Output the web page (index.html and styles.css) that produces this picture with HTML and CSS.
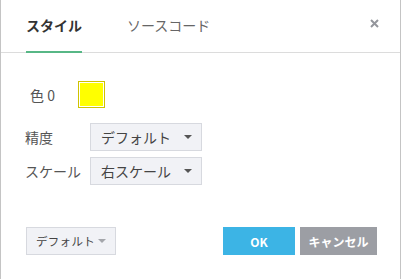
FILE: index.html
```html
<!DOCTYPE html>
<html>
<head>
	<meta charset="UTF-8">
	<title>スタイル</title>
	<link rel="stylesheet" href="styles.css">
</head>
<body>
	<div class="dialog">
		<div class="header">
			<span class="tab active">スタイル</span>
			<span class="tab">ソースコード</span>
			<svg class="close" width="9" height="9" viewBox="0 0 9 9">
				<path d="M1 1L8 8M8 1L1 8" stroke="#94969c" stroke-width="2"/>
			</svg>
		</div>

		<div class="content">
			<div class="row color-row">
				<span class="label">色 0</span>
				<span class="swatch"></span>
			</div>
			<div class="row">
				<span class="label">精度</span>
				<span class="select">デフォルト<i class="arrow"></i></span>
			</div>
			<div class="row">
				<span class="label">スケール</span>
				<span class="select">右スケール<i class="arrow"></i></span>
			</div>
		</div>

		<div class="footer">
			<span class="btn-default">デフォルト<i class="arrow light"></i></span>
			<span class="btn ok">OK</span>
			<span class="btn cancel">キャンセル</span>
		</div>
	</div>
</body>
</html>
```

FILE: styles.css
```css
*
{
	margin: 0px;
	padding: 0px;
	box-sizing: border-box;
}
body
{
	font-family: "Noto Sans CJK JP", "Noto Sans", sans-serif;
	color: #333;
	background: #fff;
}
.dialog
{
	width: 401px;
	height: 279px;
	border-left: 1px solid #c4c4c4;
	border-right: 1px solid #c4c4c4;
}
.header
{
	display: flex;
	align-items: flex-end;
	height: 53px;
	padding: 0 21px 0 25px;
	border-bottom: 1px solid #dcdcdc;
}
.tab
{
	font-size: 14px;
	line-height: 20px;
	color: #666;
	padding-bottom: 16px;
	margin-right: 45px;
	margin-bottom: -1px;
	border-bottom: 2px solid transparent;
}
.tab.active
{
	color: #333;
	font-weight: bold;
	border-bottom-color: #57b786;
}
.close
{
	margin-left: auto;
	align-self: flex-start;
	margin-top: 19px;
}
.content
{
	padding: 28px 0 0 24px;
}
.row
{
	display: flex;
	align-items: center;
	margin-bottom: 6px;
	font-size: 14px;
}
.label
{
	width: 65px;
	color: #555;
	line-height: 20px;
}
.color-row
{
	margin-bottom: 15px;
	padding-left: 5px;
}
.color-row .label
{
	width: 48px;
}
.swatch
{
	width: 27px;
	height: 27px;
	padding: 1px;
	background: #ffff00;
	background-clip: content-box;
	border: 1px solid #cfc300;
}
.select
{
	display: flex;
	align-items: center;
	width: 112px;
	height: 28px;
	padding-left: 10px;
	background: #f1f2f6;
	border: 1px solid #d7d9df;
	color: #444;
	line-height: 20px;
	white-space: nowrap;
}
.arrow
{
	margin-left: auto;
	margin-right: 9px;
	width: 0;
	height: 0;
	border-left: 4px solid transparent;
	border-right: 4px solid transparent;
	border-top: 4px solid #555;
}
.arrow.light
{
	border-top-color: #a4a6ab;
	margin-right: 9px;
}
.footer
{
	display: flex;
	align-items: center;
	margin-top: 42px;
	padding: 0 23px 0 25px;
}
.btn-default
{
	display: flex;
	align-items: center;
	width: 90px;
	height: 28px;
	padding-left: 9px;
	font-size: 11.5px;
	letter-spacing: 0.3px;
	color: #444;
	background: #f1f2f6;
	border: 1px solid #d7d9df;
	white-space: nowrap;
}
.btn
{
	display: flex;
	align-items: center;
	justify-content: center;
	height: 28px;
	font-size: 12px;
	font-weight: bold;
	color: #fff;
	white-space: nowrap;
}
.ok
{
	width: 72px;
	margin-left: auto;
	background: #3cb4e5;
}
.cancel
{
	width: 77px;
	margin-left: 5px;
	background: #9c9ea4;
}
```
